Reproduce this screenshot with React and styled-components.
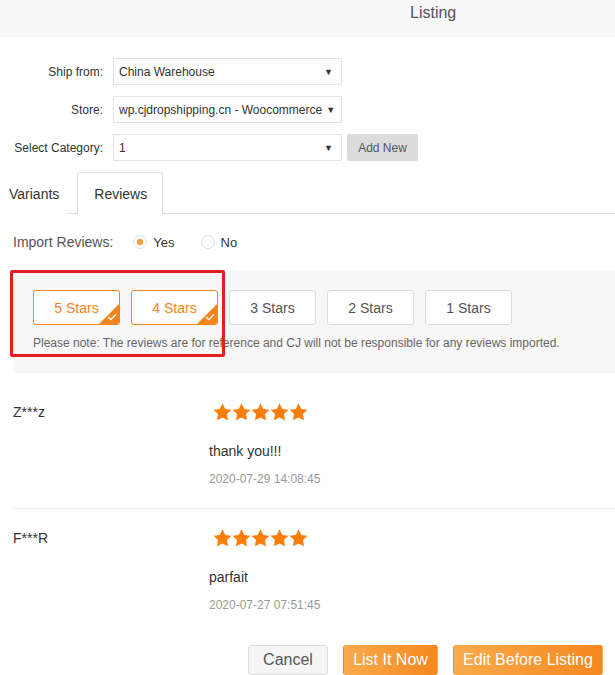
import React from "react"
import styled, { createGlobalStyle } from "styled-components"

const GlobalStyle = createGlobalStyle`
  body {
    margin: 0;
    background: #fff;
    font-family: "Liberation Sans", Arial, sans-serif;
    color: #333;
  }
`

const orange = "#f5841f"

const Page = styled.div`
  width: 615px;
  height: 675px;
  overflow: hidden;
  background: #fff;
`

const Header = styled.div`
  height: 37px;
  box-sizing: border-box;
  padding: 3px 0 0 410px;
  background: #f8f8f8;
  font-size: 16px;
  line-height: 20px;
  color: #555;
`

const Form = styled.div`
  display: grid;
  grid-template-columns: 103px 229px auto;
  column-gap: 10px;
  row-gap: 11px;
  align-items: center;
  margin-top: 21px;
  justify-content: start;
`

const Label = styled.label`
  font-size: 12px;
  text-align: right;
  color: #333;
`

const Select = styled.div`
  height: 27px;
  box-sizing: border-box;
  border: 1px solid #e3e3e3;
  display: flex;
  align-items: center;
  justify-content: space-between;
  padding: 0 8px 0 5px;
  font-size: 12px;
  color: #333;
  white-space: nowrap;
  &::after {
    content: "▼";
    font-size: 9px;
    color: #333;
    margin-left: 4px;
  }
`

const AddButton = styled.button`
  height: 27px;
  width: 71px;
  margin-left: -5px;
  border: none;
  border-radius: 2px;
  background: #dcdcdc;
  color: #555;
  font-family: inherit;
  font-size: 12px;
`

const TabBar = styled.div`
  display: flex;
  height: 41px;
  margin-top: 11px;
  border-bottom: 1px solid #ddd;
`

const Tab = styled.div`
  display: flex;
  align-items: center;
  padding: 0 ${p => (p.$active ? "15px 0 16px" : "8px")};
  margin-left: ${p => (p.$active ? "9px" : "0")};
  font-size: 14px;
  color: #333;
  background: #fff;
  border: 1px solid ${p => (p.$active ? "#ddd" : "transparent")};
  border-bottom: none;
  border-radius: 3px 3px 0 0;
  margin-bottom: -1px;
  height: 42px;
  box-sizing: border-box;
`

const ImportRow = styled.div`
  height: 56px;
  display: flex;
  align-items: center;
  padding-left: 13px;
  font-size: 14px;
  color: #555;
`

const RadioGroup = styled.div`
  display: flex;
  align-items: center;
  margin-left: 20px;
  gap: 26px;
`

const Radio = styled.span`
  display: flex;
  align-items: center;
  gap: 6px;
  font-size: 13px;
  color: #333;
  &::before {
    content: "";
    width: 14px;
    height: 14px;
    box-sizing: border-box;
    border-radius: 50%;
    border: 1px solid #e2e2e2;
    background: ${p =>
      p.$checked
        ? "radial-gradient(circle, #f5a03c 0 3px, #fff 3.5px)"
        : "#fff"};
  }
`

const Panel = styled.div`
  position: relative;
  margin-left: 13px;
  height: 103px;
  box-sizing: border-box;
  padding: 20px 0 0 20px;
  background: #f7f7f7;
`

const StarButtons = styled.div`
  display: flex;
  gap: 11px;
`

const StarButton = styled.button`
  position: relative;
  width: 87px;
  height: 35px;
  overflow: hidden;
  border-radius: 3px;
  border: 1px solid ${p => (p.$active ? orange : "#dcdcdc")};
  background: #fff;
  color: ${p => (p.$active ? orange : "#555")};
  font-family: inherit;
  font-size: 14px;
  padding: 0;
`

const Corner = styled.span`
  position: absolute;
  right: 0;
  bottom: 0;
  width: 20px;
  height: 20px;
  background: ${orange};
  clip-path: polygon(100% 0, 100% 100%, 0 100%);
  display: flex;
  align-items: flex-end;
  justify-content: flex-end;
`

const Note = styled.div`
  margin-top: 10px;
  font-size: 12px;
  line-height: 16px;
  color: #666;
`

const Highlight = styled.div`
  position: absolute;
  left: -3px;
  top: 0;
  width: 215px;
  height: 87px;
  box-sizing: border-box;
  border: 3px solid #e3201f;
  border-radius: 2px;
  pointer-events: none;
`

const ReviewList = styled.div`
  padding-top: 10px;
  margin-left: 13px;
`

const Review = styled.div`
  display: flex;
  padding: 20px 0 21px;
  border-bottom: 1px solid ${p => (p.$last ? "transparent" : "#eee")};
`

const Name = styled.div`
  width: 196px;
  font-size: 14px;
  line-height: 18px;
  color: #333;
`

const Body = styled.div`
  display: flex;
  flex-direction: column;
`

const Stars = styled.div`
  display: flex;
  height: 18px;
  align-items: center;
  margin-left: 4px;
`

const Text = styled.div`
  margin-top: 20px;
  font-size: 14px;
  line-height: 20px;
  color: #333;
`

const Date = styled.div`
  margin-top: 10px;
  font-size: 12px;
  line-height: 16px;
  color: #999;
`

const Footer = styled.div`
  display: flex;
  justify-content: flex-end;
  gap: 15px;
  padding-right: 12px;
  margin-top: 10px;
`

const FootButton = styled.button`
  height: 30px;
  width: ${p => p.$w}px;
  border-radius: 3px;
  font-family: inherit;
  font-size: 16px;
  padding: 0;
  border: 1px solid ${p => (p.$primary ? "transparent" : "#dcdcdc")};
  color: ${p => (p.$primary ? "#fff" : "#555")};
  background: ${p =>
    p.$primary ? "linear-gradient(to right, #faab4c, #f5871f)" : "#f5f5f5"};
`

const Star = () => (
  <svg width="19" height="18" viewBox="0 0 24 23">
    <path
      fill="#fa7d0a"
      d="M12 .4l3.5 7.2 7.9 1.1-5.7 5.5 1.4 7.9L12 18.4l-7.1 3.7 1.4-7.9L.6 8.7l7.9-1.1z"
    />
  </svg>
)

const Check = () => (
  <svg width="10" height="8" viewBox="0 0 10 8" style={{ margin: "0 2px 3px 0" }}>
    <path d="M1 4l2.8 2.6L9 1.2" fill="none" stroke="#fff" strokeWidth="1.3" />
  </svg>
)

const ratings = [
  { label: "5 Stars", active: true },
  { label: "4 Stars", active: true },
  { label: "3 Stars" },
  { label: "2 Stars" },
  { label: "1 Stars" },
]

const reviews = [
  { name: "Z***z", text: "thank you!!!", date: "2020-07-29 14:08:45" },
  { name: "F***R", text: "parfait", date: "2020-07-27 07:51:45" },
]

export default function App() {
  return (
    <Page>
      <GlobalStyle />
      <Header>Listing</Header>
      <Form>
        <Label>Ship from:</Label>
        <Select>China Warehouse</Select>
        <span />
        <Label>Store:</Label>
        <Select>wp.cjdropshipping.cn - Woocommerce</Select>
        <span />
        <Label>Select Category:</Label>
        <Select>1</Select>
        <AddButton>Add New</AddButton>
      </Form>
      <TabBar>
        <Tab>Variants</Tab>
        <Tab $active>Reviews</Tab>
      </TabBar>
      <ImportRow>
        Import Reviews:
        <RadioGroup>
          <Radio $checked>Yes</Radio>
          <Radio>No</Radio>
        </RadioGroup>
      </ImportRow>
      <Panel>
        <StarButtons>
          {ratings.map(r => (
            <StarButton key={r.label} $active={r.active}>
              {r.label}
              {r.active && (
                <Corner>
                  <Check />
                </Corner>
              )}
            </StarButton>
          ))}
        </StarButtons>
        <Note>
          Please note: The reviews are for reference and CJ will not be
          responsible for any reviews imported.
        </Note>
        <Highlight />
      </Panel>
      <ReviewList>
        {reviews.map((r, i) => (
          <Review key={r.name} $last={i === reviews.length - 1}>
            <Name>{r.name}</Name>
            <Body>
              <Stars>
                {[0, 1, 2, 3, 4].map(n => (
                  <Star key={n} />
                ))}
              </Stars>
              <Text>{r.text}</Text>
              <Date>{r.date}</Date>
            </Body>
          </Review>
        ))}
      </ReviewList>
      <Footer>
        <FootButton $w={80}>Cancel</FootButton>
        <FootButton $w={95} $primary>List It Now</FootButton>
        <FootButton $w={150} $primary>Edit Before Listing</FootButton>
      </Footer>
    </Page>
  )
}
